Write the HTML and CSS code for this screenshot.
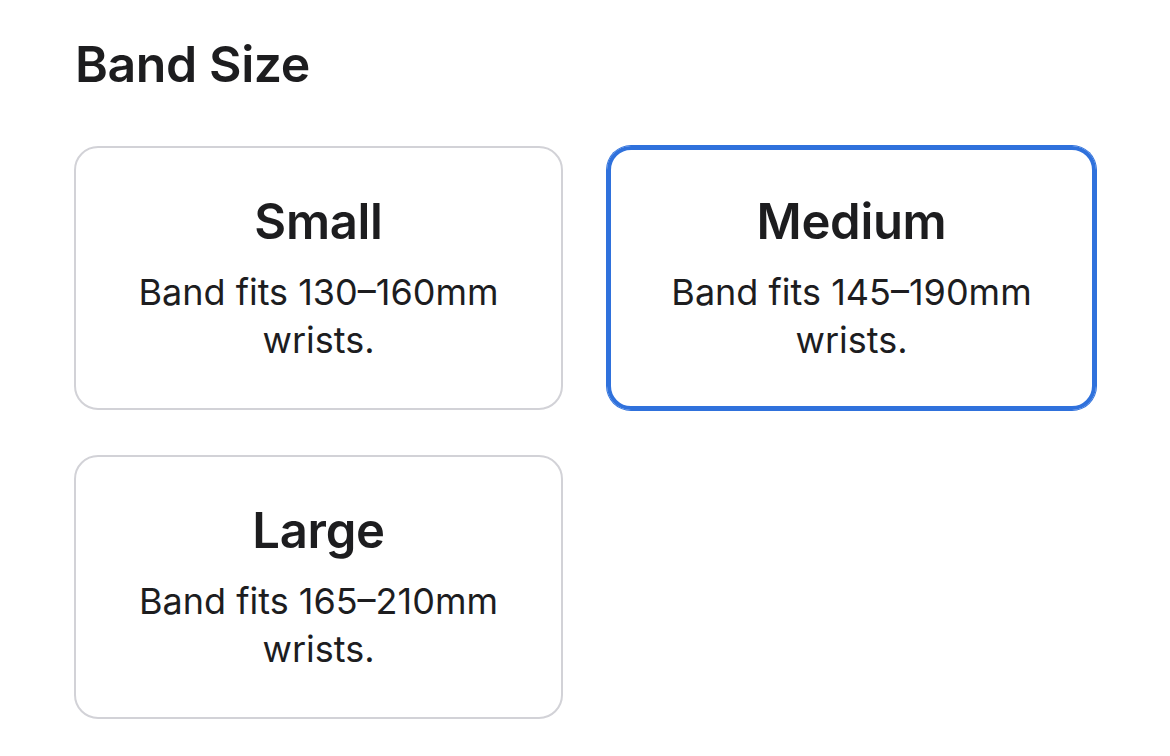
FILE: index.html
```html
<!DOCTYPE html>
<html lang="en">
<head>
    <meta charset="UTF-8">
    <title>Band Size</title>
    <link rel="stylesheet" href="styles.css">
</head>
<body>

    <h2 class="section-title">Band Size</h2>

    <div class="size-grid">
        <div class="size-card">
            <div class="size-name">Small</div>
            <div class="size-desc">Band fits 130–160mm wrists.</div>
        </div>
        <div class="size-card selected">
            <div class="size-name">Medium</div>
            <div class="size-desc">Band fits 145–190mm wrists.</div>
        </div>
        <div class="size-card">
            <div class="size-name">Large</div>
            <div class="size-desc">Band fits 165–210mm wrists.</div>
        </div>
    </div>

</body>
</html>
```

FILE: styles.css
```css
body {
    margin: 0;
    padding: 34px 74px 0 74px;
    font-family: Inter, "Noto Sans", sans-serif;
    color: #1d1d1f;
    background: #fff;
}

.section-title {
    margin: 0 0 52px 1px;
    font-size: 50px;
    font-weight: 600;
    line-height: 60px;
    letter-spacing: -0.4px;
}

.size-grid {
    display: grid;
    grid-template-columns: 489px 489px;
    column-gap: 44px;
    row-gap: 45px;
}

.size-card {
    box-sizing: border-box;
    height: 264px;
    border: 2px solid #d2d2d7;
    border-radius: 24px;
    display: flex;
    flex-direction: column;
    align-items: center;
    justify-content: center;
    text-align: center;
    padding: 0 40px;
}

.size-card.selected {
    border: 4px solid #2f71dc;
    box-shadow: 0 0 0 1px #2f71dc;
}

.size-name {
    font-size: 49px;
    font-weight: 600;
    line-height: 60px;
    margin-bottom: 16px;
    letter-spacing: -0.3px;
}

.size-desc {
    font-size: 36px;
    line-height: 48px;
}
```
